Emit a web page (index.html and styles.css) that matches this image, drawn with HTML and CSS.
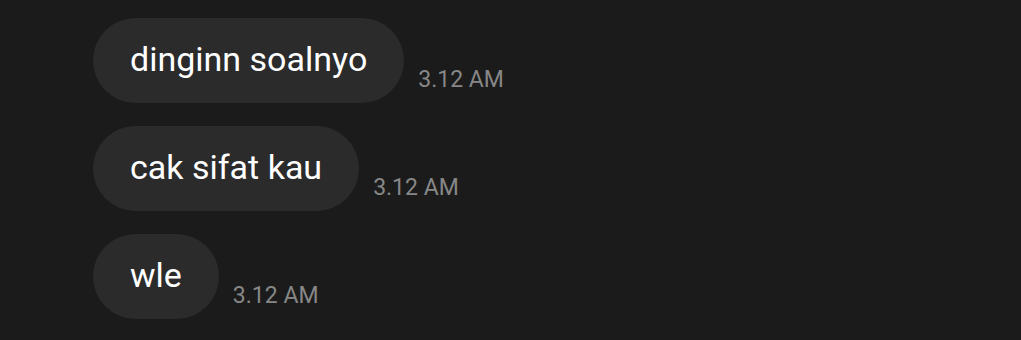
FILE: index.html
```html
<!DOCTYPE html>
<html>
<head>
<meta charset="utf-8">
<link rel="stylesheet" href="styles.css">
</head>
<body>
<div class="chat">
  <div class="row">
    <div class="bubble">dinginn soalnyo</div>
    <div class="time">3.12 AM</div>
  </div>
  <div class="row">
    <div class="bubble">cak sifat kau</div>
    <div class="time">3.12 AM</div>
  </div>
  <div class="row">
    <div class="bubble">wle</div>
    <div class="time">3.12 AM</div>
  </div>
</div>
</body>
</html>
```
FILE: styles.css
```css
html, body {
  margin: 0;
  padding: 0;
  background: #1b1b1b;
  height: 100%;
}
.chat {
  display: flex;
  flex-direction: column;
  gap: 23px;
  padding: 18px 0 0 93px;
  font-family: Roboto, "Noto Sans", sans-serif;
}
.row {
  display: flex;
  align-items: flex-end;
  gap: 14px;
}
.bubble {
  background: #2b2b2b;
  color: #ffffff;
  font-size: 34px;
  line-height: 83px;
  height: 85px;
  padding: 0 37px;
  border-radius: 43px;
  box-sizing: border-box;
}
.time {
  color: #878787;
  font-size: 23px;
  line-height: 27px;
  padding-bottom: 10px;
}
```
